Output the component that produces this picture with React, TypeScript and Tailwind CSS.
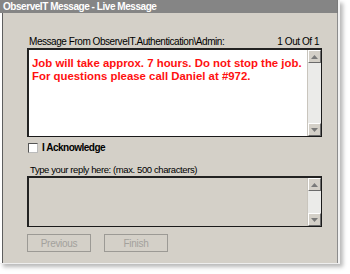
import React from "react";

function Arrow({ dir }: { dir: "up" | "down" }) {
  return (
    <div className="w-[13px] h-[13px] shrink-0 bg-[#d4d0c8] border border-t-white border-l-white border-r-[#6b6b6b] border-b-[#6b6b6b] flex items-center justify-center">
      <svg width="7" height="4" viewBox="0 0 7 4">
        {dir === "up" ? (
          <polygon points="3.5,0 7,4 0,4" fill="#7a7a7a" />
        ) : (
          <polygon points="0,0 7,0 3.5,4" fill="#7a7a7a" />
        )}
      </svg>
    </div>
  );
}

function ScrollBar() {
  return (
    <div className="w-[14px] h-full flex flex-col bg-[#ebebe9] border-l border-[#c9c5bd] shrink-0">
      <Arrow dir="up" />
      <div className="flex-1" />
      <Arrow dir="down" />
    </div>
  );
}

export default function App() {
  return (
    <div
      className="w-[350px] h-[274px] bg-white overflow-hidden"
      style={{ fontFamily: '"Liberation Sans", Arial, sans-serif' }}
    >
      <div className="w-[340px] h-[264px] flex flex-col border-r-2 border-b border-r-[#f2f2f2] border-b-[#eeeeee] shadow-[3px_3px_4px_rgba(0,0,0,0.28)]">
        <div className="h-[13px] bg-[#858585] text-white font-bold text-[10px] tracking-[-0.45px] leading-[13px] pl-[3px] border-r border-[#7a7a7a] whitespace-nowrap">
          ObserveIT Message - Live Message
        </div>
        <div className="flex-1 bg-[#d4d0c8] ml-[2px] border-l border-r border-l-[#5e5e5e] border-r-[#8c8c8c] pl-[24px] pr-[14px] pt-[23px] flex flex-col text-[#000]">
          <div className="h-[11px] leading-[11px] text-[10px] tracking-[-0.45px] flex justify-between pl-[2px] pr-[4px] whitespace-nowrap">
            <span>Message From ObserveIT.Authentication\Admin:</span>
            <span>1 Out Of 1</span>
          </div>
          <div className="mt-[1px] h-[89px] w-[295px] flex border border-[#1a1a1a] border-t-2 border-l-2 border-t-[#222] border-l-[#222]">
            <div className="flex-1 bg-white pl-[3px] pt-[7px] text-[#ff1010] font-bold text-[11.4px] leading-[12.5px] whitespace-nowrap">
              <div>Job will take approx. 7 hours. Do not stop the job.</div>
              <div>For questions please call Daniel at #972.</div>
            </div>
            <ScrollBar />
          </div>
          <div className="mt-[6px] h-[10px] flex items-center pl-[1px]">
            <div className="w-[10px] h-[10px] bg-white border border-t-[#555] border-l-[#555] border-r-[#bbb] border-b-[#bbb]" />
            <span className="ml-[4px] text-[10px] tracking-[-0.5px] font-bold leading-[10px] whitespace-nowrap">I Acknowledge</span>
          </div>
          <div className="mt-[11px] h-[11px] leading-[11px] text-[9.5px] tracking-[-0.4px] pl-[3px] whitespace-nowrap">
            Type your reply here: (max. 500 characters)
          </div>
          <div className="mt-[1px] h-[51px] w-[295px] flex border border-[#1a1a1a] border-t-2 border-l-2 border-t-[#222] border-l-[#222]">
            <div className="flex-1 bg-[#d4d0c8]" />
            <ScrollBar />
          </div>
          <div className="mt-[7px] flex gap-[13px]">
            <div className="w-[64px] h-[18px] border border-[#9c9a95] flex items-center justify-center text-[10px] tracking-[-0.3px] text-[#a3a19c]">
              Previous
            </div>
            <div className="w-[64px] h-[18px] border border-[#9c9a95] flex items-center justify-center text-[10px] tracking-[-0.3px] text-[#a3a19c]">
              Finish
            </div>
          </div>
        </div>
      </div>
    </div>
  );
}
